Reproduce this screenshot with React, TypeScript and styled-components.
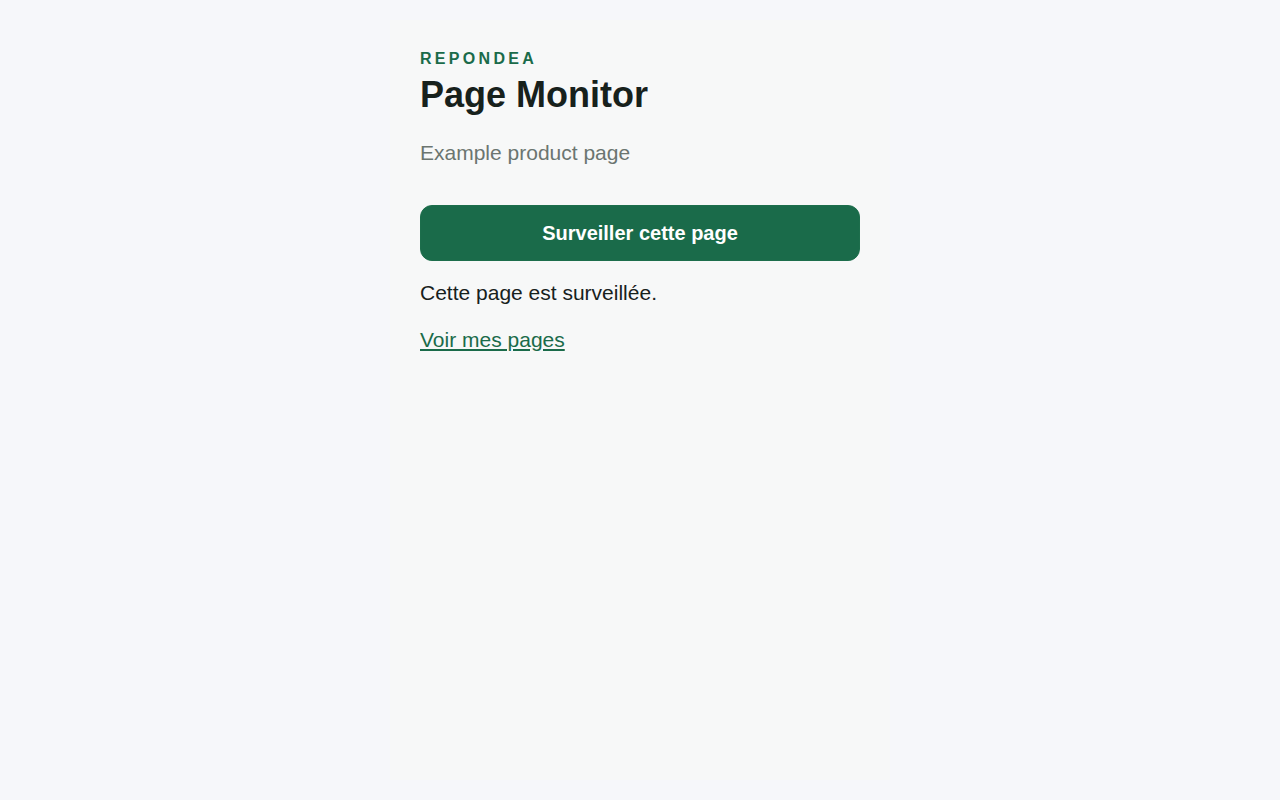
import { FC, ReactElement } from 'react';
import styled, { createGlobalStyle } from 'styled-components';

const GlobalStyle = createGlobalStyle`
    html, body {
        margin: 0;
        padding: 0;
        background: #f6f7fa;
    }
    body {
        font-family: 'Liberation Sans', Arial, sans-serif;
        color: #17211c;
    }
    * {
        box-sizing: border-box;
    }
`;

const App: FC = (): ReactElement => {
    return (
        <>
            <GlobalStyle />
            <Page>
                <Panel>
                    <Brand>Repondea</Brand>
                    <Title>Page Monitor</Title>
                    <Subtitle>Example product page</Subtitle>
                    <Watch type="button">Surveiller cette page</Watch>
                    <Status>Cette page est surveillée.</Status>
                    <PagesLink href="#">Voir mes pages</PagesLink>
                </Panel>
            </Page>
        </>
    );
};

const Page = styled.main`
    min-height: 100vh;
    padding: 20px 0;
    display: flex;
    justify-content: center;
`;
const Panel = styled.section`
    width: 500px;
    min-height: 760px;
    background: #f7f8f8;
    padding: 30px 30px;
    display: flex;
    flex-direction: column;
    align-items: flex-start;
`;
const Brand = styled.div`
    font-size: 16px;
    line-height: 17px;
    font-weight: 700;
    letter-spacing: 3.3px;
    text-transform: uppercase;
    color: #1a6b4a;
`;
const Title = styled.h1`
    margin: 7px 0 0;
    font-size: 36px;
    line-height: 41px;
    font-weight: 700;
    color: #17211c;
`;
const Subtitle = styled.p`
    margin: 26px 0 0;
    font-size: 21px;
    line-height: 24px;
    color: #6b7570;
`;
const Watch = styled.button`
    margin-top: 40px;
    width: 100%;
    height: 56px;
    border: 1px solid #1d6e4c;
    border-radius: 12px;
    background: #1a6b4a;
    color: #ffffff;
    font-family: 'Liberation Sans', Arial, sans-serif;
    font-size: 20px;
    font-weight: 700;
    cursor: pointer;
`;
const Status = styled.p`
    margin: 20px 0 0;
    font-size: 21px;
    line-height: 24px;
    color: #17211c;
`;
const PagesLink = styled.a`
    margin-top: 23px;
    font-size: 21px;
    line-height: 24px;
    color: #1a6b4a;
    text-decoration: underline;
`;

export default App;
